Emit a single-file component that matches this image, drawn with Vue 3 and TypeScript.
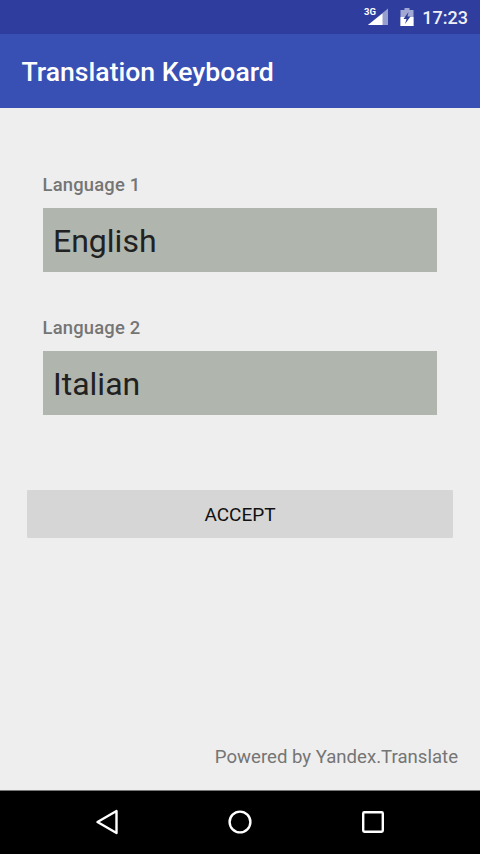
<script setup lang="ts">
const languages = [
  { label: 'Language 1', value: 'English' },
  { label: 'Language 2', value: 'Italian' },
]
</script>

<template>
  <div class="screen">
    <header class="status">
      <svg class="signal" viewBox="0 0 22 18" width="22" height="18">
        <path d="M21 0.5V17H1Z" fill="#fff" opacity="0.5" />
        <path d="M15.5 5.5V17H1Z" fill="#fff" />
        <text x="-3" y="7" class="net">3G</text>
      </svg>
      <svg class="battery" viewBox="0 0 14 18" width="14" height="18">
        <path d="M4.5 0H9.5V2H13.5V18H0.5V2H4.5Z" fill="#fff" opacity="0.55" />
        <path d="M0.5 9H13.5V18H0.5Z" fill="#fff" />
        <path d="M8.5 4L3.5 11H6.5L5 16L10.5 8.5H7.5Z" fill="#2f3f9c" />
      </svg>
      <span class="time">17:23</span>
    </header>
    <div class="appbar"><h1>Translation Keyboard</h1></div>
    <main class="content">
      <section class="fields">
        <div v-for="l in languages" :key="l.label" class="field">
          <label>{{ l.label }}</label>
          <div class="select">{{ l.value }}</div>
        </div>
      </section>
      <button class="accept">ACCEPT</button>
      <p class="powered">Powered by Yandex.Translate</p>
    </main>
    <nav class="navbar">
      <svg viewBox="0 0 24 26" width="24" height="26">
        <path d="M21.5 2V24L2.5 13Z" fill="none" stroke="#fff" stroke-width="2.4" stroke-linejoin="round" />
      </svg>
      <svg viewBox="0 0 24 24" width="24" height="24">
        <circle cx="12" cy="12" r="10.4" fill="none" stroke="#fff" stroke-width="2.4" />
      </svg>
      <svg viewBox="0 0 24 24" width="24" height="24">
        <rect x="2.2" y="2.2" width="19.6" height="19.6" rx="1.2" fill="none" stroke="#fff" stroke-width="2.4" />
      </svg>
    </nav>
  </div>
</template>

<style scoped>
.screen {
  width: 480px;
  height: 854px;
  display: flex;
  flex-direction: column;
  background: #eeeeee;
  font-family: Roboto, "Liberation Sans", sans-serif;
  overflow: hidden;
}
.status {
  height: 34px;
  flex: none;
  background: #2f3e9e;
  display: flex;
  align-items: center;
  justify-content: flex-end;
  padding-right: 12px;
  color: #fff;
}
.signal { margin-right: 11px; overflow: visible; }
.net { font-size: 9.5px; font-weight: 700; fill: #fff; }
.battery { margin-right: 8px; }
.time { font-size: 18px; font-weight: 500; color: #f0f1f8; }
.appbar {
  height: 74px;
  flex: none;
  background: #3850b4;
  display: flex;
  align-items: center;
  padding-left: 21.5px;
  box-sizing: border-box;
}
h1 {
  margin: 0;
  font-size: 26.6px;
  font-weight: 500;
  color: #fff;
}
.content {
  flex: 1;
  display: flex;
  flex-direction: column;
  padding: 67px 27px 0;
}
.fields {
  display: flex;
  flex-direction: column;
  gap: 46px;
  padding: 0 16px;
}
.field { display: flex; flex-direction: column; gap: 13px; }
label {
  font-size: 18.4px;
  letter-spacing: 0.2px;
  line-height: 20px;
  font-weight: 500;
  color: #757575;
  margin-left: -0.5px;
}
.select {
  height: 64px;
  background: #b0b5ae;
  color: #212121;
  font-size: 32px;
  display: flex;
  align-items: center;
  padding: 1px 0 0 10px;
  box-sizing: border-box;
}
.accept {
  margin-top: 75px;
  height: 48px;
  border: 0;
  border-radius: 1px;
  background: #d6d6d6;
  color: #111;
  font-family: inherit;
  font-size: 19px;
  font-weight: 400;
  padding: 0;
}
.powered {
  margin: auto -5px 21px 0;
  text-align: right;
  color: #757575;
  font-size: 18.6px;
  line-height: 24px;
}
.navbar {
  height: 64px;
  flex: none;
  background: #000;
  border-top: 1px solid #777;
  box-sizing: border-box;
  display: flex;
  align-items: center;
  justify-content: center;
  gap: 109px;
  padding-bottom: 1px;
}
</style>
